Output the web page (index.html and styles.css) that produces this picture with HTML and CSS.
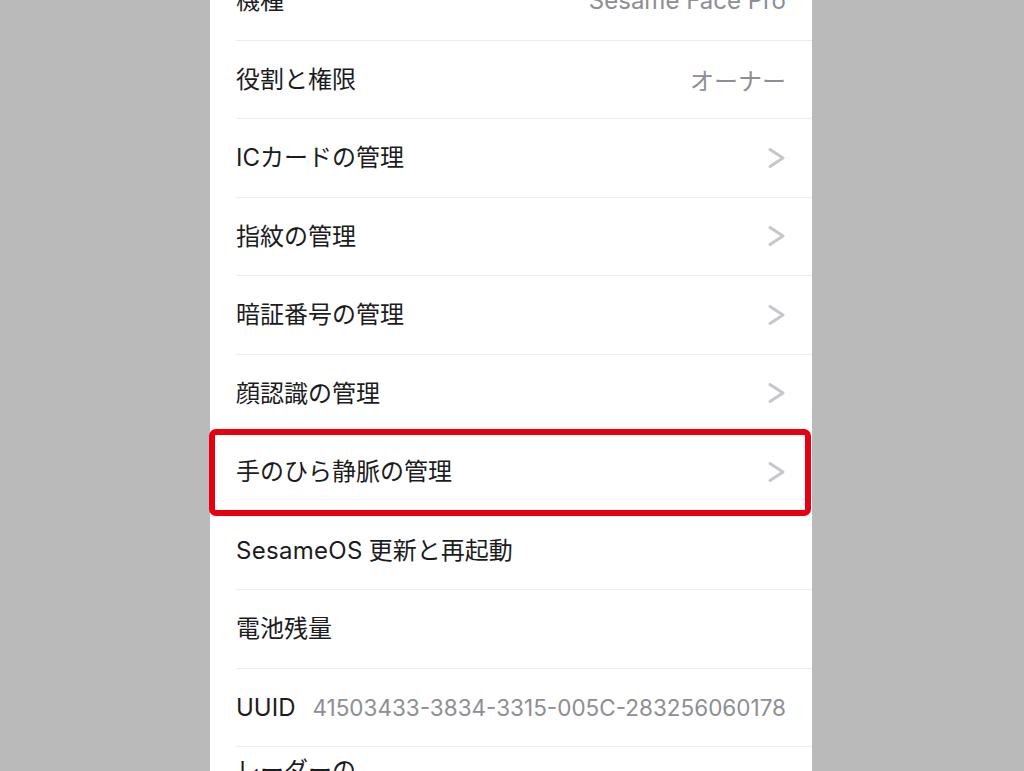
FILE: index.html
```html
<!DOCTYPE html>
<html lang="ja">
<head>
<meta charset="utf-8">
<title>設定</title>
<link rel="stylesheet" href="styles.css">
</head>
<body>
<div class="panel">
  <div class="row"><div class="row-inner"><span class="label">機種</span><span class="value">Sesame Face Pro</span></div></div>
  <div class="row"><div class="row-inner"><span class="label">役割と権限</span><span class="value">オーナー</span></div></div>
  <div class="row"><div class="row-inner"><span class="label">ICカードの管理</span><svg class="chev" viewBox="0 0 20 22"><polyline points="3,2.5 16,11 3,19.5"/></svg></div></div>
  <div class="row"><div class="row-inner"><span class="label">指紋の管理</span><svg class="chev" viewBox="0 0 20 22"><polyline points="3,2.5 16,11 3,19.5"/></svg></div></div>
  <div class="row"><div class="row-inner"><span class="label">暗証番号の管理</span><svg class="chev" viewBox="0 0 20 22"><polyline points="3,2.5 16,11 3,19.5"/></svg></div></div>
  <div class="row"><div class="row-inner"><span class="label">顔認識の管理</span><svg class="chev" viewBox="0 0 20 22"><polyline points="3,2.5 16,11 3,19.5"/></svg></div></div>
  <div class="row highlight"><div class="row-inner"><span class="label">手のひら静脈の管理</span><svg class="chev" viewBox="0 0 20 22"><polyline points="3,2.5 16,11 3,19.5"/></svg></div></div>
  <div class="row"><div class="row-inner"><span class="label"><span class="latin">SesameOS</span>更新と再起動</span></div></div>
  <div class="row"><div class="row-inner"><span class="label">電池残量</span></div></div>
  <div class="row"><div class="row-inner"><span class="label">UUID</span><span class="value uuid">41503433-3834-3315-005C-283256060178</span></div></div>
  <div class="row tall"><div class="row-inner"><span class="label">レーダーの<br>感度</span></div></div>
</div>
</body>
</html>
```
FILE: styles.css
```css
html, body {
  margin: 0;
  padding: 0;
  height: 100%;
  overflow: hidden;
  background: #bababa;
}
body {
  font-family: Inter, "Noto Sans CJK JP", "Noto Sans", sans-serif;
  color: #1c1c1e;
}
.panel {
  width: 602px;
  margin: -38px 0 0 210px;
  background: #ffffff;
  padding-bottom: 40px;
}
.row {
  position: relative;
  display: flex;
  padding-left: 26px;
}
.row-inner {
  flex: 1;
  min-width: 0;
  display: flex;
  align-items: center;
  justify-content: space-between;
  height: 78.5px;
  box-sizing: border-box;
  border-bottom: 1px solid #ececec;
  padding-right: 26px;
}
.label {
  font-size: 24px;
  line-height: 1.3;
  white-space: nowrap;
}
.latin {
  letter-spacing: 0.3px;
  margin-right: 6px;
}
.value {
  font-size: 24px;
  color: #8e8e93;
  white-space: nowrap;
}
.uuid {
  flex: 1;
  min-width: 0;
  font-size: 22.5px;
  text-align: right;
  margin-left: 12px;
}
.chev {
  width: 20px;
  height: 22px;
  margin-right: -1px;
}
.chev polyline {
  fill: none;
  stroke: #c7c7cb;
  stroke-width: 3;
  stroke-linecap: round;
  stroke-linejoin: round;
}
.highlight::after {
  content: "";
  position: absolute;
  top: -4px;
  left: -1px;
  right: 1px;
  bottom: -4.5px;
  border: 6px solid #e60012;
  border-radius: 7px;
  pointer-events: none;
}
.tall .row-inner {
  height: auto;
  align-items: flex-start;
  padding-top: 8px;
  padding-bottom: 10px;
}
```
